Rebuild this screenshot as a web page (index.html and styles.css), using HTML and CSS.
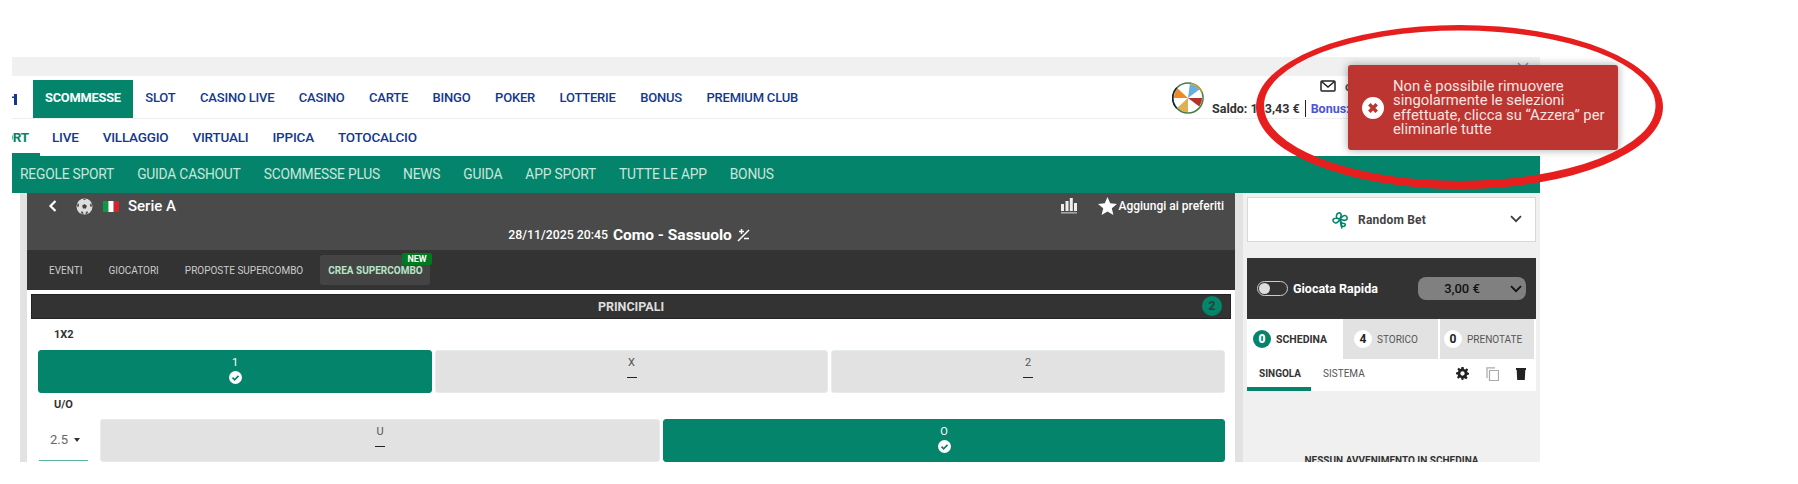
FILE: index.html
```html
<!DOCTYPE html>
<html lang="it">
<head>
    <meta charset="UTF-8">
    <meta name="viewport" content="width=device-width, initial-scale=1.0">
    <title>Scommesse - Serie A</title>
    <link rel="stylesheet" href="styles.css">
</head>
<body>
    <div class="page">
        <div class="topbar">
            <svg class="topbar-chevron" width="12" height="8" viewBox="0 0 12 8"><path d="M1 1l5 5 5-5" fill="none" stroke="#7f93bd" stroke-width="1.5"/></svg>
        </div>

        <!-- Main nav -->
        <header class="mainnav">
            <svg class="logo-cut" width="5" height="11" viewBox="0 0 5 11"><path d="M2 0h3v11H2V4H0V2.500h2z" fill="#12398f"/></svg>
            <a class="mainnav-active" href="#">SCOMMESSE</a>
            <a href="#">SLOT</a>
            <a href="#">CASINO LIVE</a>
            <a href="#">CASINO</a>
            <a href="#">CARTE</a>
            <a href="#">BINGO</a>
            <a href="#">POKER</a>
            <a href="#">LOTTERIE</a>
            <a href="#">BONUS</a>
            <a href="#">PREMIUM CLUB</a>
            <div class="account">
                <svg class="wheel" width="32" height="32" viewBox="0 0 34 34">
                    <circle cx="17" cy="17" r="16" fill="#fff"/>
                    <path d="M17 17L19 2A15 15 0 0 1 29 8z" fill="#6aaedc"/>
                    <path d="M17 17H32A15 15 0 0 1 29 26z" fill="#b03228"/>
                    <path d="M17 17V32A15 15 0 0 1 6 27z" fill="#dfb050"/>
                    <path d="M17 17H2A15 15 0 0 1 6 7z" fill="#ee8a26"/>
                    <circle cx="17" cy="17" r="16" fill="none" stroke="#4b7b45" stroke-width="1.6"/>
                    <path d="M5 6A16 16 0 0 0 5 28" fill="none" stroke="#123" stroke-width="1.6"/>
                    <path d="M20 1.500A16 16 0 0 1 32 11" fill="none" stroke="#c9a03c" stroke-width="1.6"/>
                </svg>
                <div class="account-info">
                    <div class="account-mail">
                        <svg width="16" height="12" viewBox="0 0 16 12"><rect x="1" y="1" width="14" height="10" rx="1" fill="none" stroke="#222" stroke-width="1.5"/><path d="M1.500 1.500L8 7l6.500-5.500" fill="none" stroke="#222" stroke-width="1.5"/></svg>
                        <span class="account-user">c</span>
                    </div>
                    <div class="account-balance">
                        <span>Saldo: 193,43 €</span>
                        <span class="account-bonus">Bonus:</span>
                    </div>
                </div>
            </div>
        </header>

        <nav class="subnav">
            <a class="subnav-active" href="#"><span>SPORT</span></a>
            <a href="#">LIVE</a>
            <a href="#">VILLAGGIO</a>
            <a href="#">VIRTUALI</a>
            <a href="#">IPPICA</a>
            <a href="#">TOTOCALCIO</a>
        </nav>

        <nav class="greenbar">
            <a href="#">REGOLE SPORT</a>
            <a href="#">GUIDA CASHOUT</a>
            <a href="#">SCOMMESSE PLUS</a>
            <a href="#">NEWS</a>
            <a href="#">GUIDA</a>
            <a href="#">APP SPORT</a>
            <a href="#">TUTTE LE APP</a>
            <a href="#">BONUS</a>
        </nav>

        <div class="content">
            <main class="event">
                <section class="event-head">
                    <div class="event-league">
                        <svg width="10" height="14" viewBox="0 0 10 14"><path d="M7.500 2L2.500 7l5 5" fill="none" stroke="#fff" stroke-width="2.2"/></svg>
                        <svg class="ball" width="17" height="17" viewBox="0 0 17 17">
                            <circle cx="8.500" cy="8.500" r="8" fill="#ddd"/>
                            <path d="M8.500 6l2.400 1.700-.9 2.800H7l-.9-2.800zM7 1l1.500 1.200L10 1zM1.800 5L3 6.500 2.500 9 1 8.500zM15.200 5L14 6.500l.5 2.500 1.500-.5zM5 13.500l2 .2.500 2.300-2-.5zM12 13.500l-2 .2-.5 2.300 2-.5z" fill="#444"/>
                        </svg>
                        <svg class="flag" width="16" height="11" viewBox="0 0 16 11"><rect width="5.4" height="11" fill="#0a9a46"/><rect x="5.4" width="5.3" height="11" fill="#fff"/><rect x="10.7" width="5.3" height="11" fill="#d8232f"/></svg>
                        <span class="event-league-name">Serie A</span>
                        <div class="event-actions">
                            <svg width="16" height="16" viewBox="0 0 16 16"><path d="M0 6h3v7H0zM4.500 3h3v10h-3zM8.800 0h3v13h-3zM13 5h3v8h-3z" fill="#eee"/><rect y="14.200" width="16" height="1.300" fill="#bbb"/></svg>
                            <div class="event-fav">
                                <svg width="19" height="18" viewBox="0 0 19 18"><path d="M9.500 0l2.700 6.300 6.800.6-5.200 4.400 1.600 6.700-5.900-3.600L3.600 18l1.600-6.700L0 6.900l6.800-.6z" fill="#fff"/></svg>
                                <span>Aggiungi ai preferiti</span>
                            </div>
                        </div>
                    </div>
                    <div class="event-title">
                        <span class="event-date">28/11/2025 20:45</span>
                        <span class="event-teams">Como - Sassuolo</span>
                        <svg width="13" height="13" viewBox="0 0 13 13"><path d="M1 12L12 1M2 2.500h5M4.500 0v5M7 9.500h5" fill="none" stroke="#fff" stroke-width="1.5"/></svg>
                    </div>
                </section>

                <div class="event-tabs">
                    <a href="#">EVENTI</a>
                    <a href="#">GIOCATORI</a>
                    <a href="#">PROPOSTE SUPERCOMBO</a>
                    <a class="event-tab-active" href="#">CREA SUPERCOMBO<span class="badge-new">NEW</span></a>
                </div>

                <div class="market-band">
                    <span>PRINCIPALI</span>
                    <span class="market-count">2</span>
                </div>

                <div class="market-label">1X2</div>
                <div class="odds-row">
                    <button class="odd odd-on"><span>1</span><svg class="odd-check" width="13" height="13" viewBox="0 0 13 13"><circle cx="6.500" cy="6.500" r="6.500" fill="#fff"/><path d="M3.500 6.700l2.100 2.100 3.900-4" fill="none" stroke="#04846a" stroke-width="1.7"/></svg></button>
                    <button class="odd"><span>X</span><i class="odd-dash"></i></button>
                    <button class="odd"><span>2</span><i class="odd-dash"></i></button>
                </div>

                <div class="market-label market-label-uo">U/O</div>
                <div class="odds-row odds-row-uo">
                    <div class="line-select"><span>2.5</span><i class="line-caret"></i></div>
                    <button class="odd"><span>U</span><i class="odd-dash"></i></button>
                    <button class="odd odd-on"><span>O</span><svg class="odd-check" width="13" height="13" viewBox="0 0 13 13"><circle cx="6.500" cy="6.500" r="6.500" fill="#fff"/><path d="M3.500 6.700l2.100 2.100 3.900-4" fill="none" stroke="#04846a" stroke-width="1.7"/></svg></button>
                </div>
            </main>

            <aside class="side">
                <div class="random-bet">
                    <svg width="18" height="18" viewBox="0 0 18 18"><path d="M9 8C6 8 5 6.500 5.500 4.500 6 2 9 1 10 3c.5 1 .3 2-1 5zM9 8c2-2.500 3-4 5-3.500 2.500.6 3 3.500 1 4.500-1.500.8-3.500.3-6-1zM9 8c-1.500 3-3 4.500-5 3.800C1.500 11 1.200 8 3.500 7.400 5 7 7 7.300 9 8zM9 8c1 3.500 1.500 4.500 4 4.500 2 .2 1.500 3-.5 3C10.500 15.500 9.500 12 9 8zM9.500 12l1.500 5.500" fill="none" stroke="#04846a" stroke-width="1.6"/></svg>
                    <span>Random Bet</span>
                    <svg class="random-chevron" width="12" height="8" viewBox="0 0 12 8"><path d="M1 1.200l5 5 5-5" fill="none" stroke="#3a4048" stroke-width="1.8"/></svg>
                </div>

                <div class="quick">
                    <span class="toggle"></span>
                    <span class="quick-label">Giocata Rapida</span>
                    <div class="quick-amount">
                        <span>3,00 €</span>
                        <svg width="12" height="8" viewBox="0 0 12 8"><path d="M1 1.200l5 5 5-5" fill="none" stroke="#111" stroke-width="1.8"/></svg>
                    </div>
                </div>

                <div class="slip-tabs">
                    <div class="slip-tab slip-tab-on"><b class="slip-num">0</b>SCHEDINA</div>
                    <div class="slip-tab"><b class="slip-num">4</b>STORICO</div>
                    <div class="slip-tab"><b class="slip-num">0</b>PRENOTATE</div>
                </div>

                <div class="slip-mode">
                    <a class="slip-mode-on" href="#">SINGOLA</a>
                    <a href="#">SISTEMA</a>
                    <div class="slip-tools">
                        <svg width="13" height="13" viewBox="0 0 24 24"><path fill-rule="evenodd" d="M10 0h4l.7 3.500 2.300 1 3-2L22.500 5l-2 3 1 2.300L24 11v3l-3.500.7-1 2.300 2 3-2.800 2.700-3-2-2.300 1L13.700 24h-3.400l-.7-3.500-2.300-1-3 2L1.800 19l2-3-1-2.300L0 13.500V10l3.500-.7 1-2.300-2-3L5 1.500l3 2 1.300-.5zM12 8a4 4 0 1 0 0 8 4 4 0 0 0 0-8z" fill="#222"/></svg>
                        <svg width="13" height="14" viewBox="0 0 13 14"><path d="M3.500 3.500h9v10h-9zM1 11V.8h8" fill="none" stroke="#aaa" stroke-width="1.2"/></svg>
                        <svg width="10" height="12" viewBox="0 0 10 12"><path d="M0 0h10v2H9.300L8.800 12H1.200L.7 2H0z" fill="#222"/></svg>
                    </div>
                </div>

                <div class="slip-empty">NESSUN AVVENIMENTO IN SCHEDINA</div>
            </aside>
        </div>
    </div>

    <!-- Error toast -->
    <div class="toast">
        <svg class="toast-icon" width="22" height="22" viewBox="0 0 22 22"><circle cx="11" cy="11" r="11" fill="#fff"/><path d="M7.300 7.300l7.400 7.400M14.700 7.300l-7.400 7.400" stroke="#bc3530" stroke-width="3.4"/></svg>
        <p>Non è possibile rimuovere singolarmente le selezioni effettuate, clicca su “Azzera” per eliminarle tutte</p>
    </div>

    <!-- Red marker circle drawn on the screenshot -->
    <svg class="marker" width="420" height="190" viewBox="0 0 420 190">
        <path fill-rule="evenodd" fill="#e61e1e" d="M2 84a203.500 82 0 1 0 407 0a203.500 82 0 1 0-407 0zM10 82.750a195.750 75.250 0 1 0 391.500 0a195.750 75.250 0 1 0-391.500 0z"/>
    </svg>
</body>
</html>
```

FILE: styles.css
```css
* {
    box-sizing: border-box;
}

body {
    margin: 0;
    background-color: #fff;
    font-family: "Roboto", "Liberation Sans", sans-serif;
    color: #333;
}

a {
    text-decoration: none;
    color: inherit;
}

.page {
    width: 1528px;
    height: 405px;
    margin: 57px 0 0 12px;
    overflow: hidden;
}

.marker {
    position: absolute;
    left: 1254px;
    top: 23px;
}

/* Top bars */
.topbar {
    position: relative;
    height: 19px;
    margin-bottom: 4px;
    background-color: #f0f0f0;
}

.topbar-chevron {
    position: absolute;
    right: 11px;
    top: 5px;
}

.mainnav {
    display: flex;
    align-items: center;
    height: 39px;
    border-bottom: 1px solid #eee;
    font-size: 13px;
    font-weight: 500;
    color: #12398f;
}

.mainnav a {
    padding: 0 12.25px 3px;
    white-space: nowrap;
    letter-spacing: -0.2px;
}

.logo-cut {
    margin-right: 16px;
}

.mainnav .mainnav-active {
    display: flex;
    align-items: center;
    height: 38px;
    width: 100px;
    padding: 0 12px 3px;
    background-color: #04846a;
    color: #fff;
    font-weight: 700;
    font-size: 12.8px;
}

.account {
    display: flex;
    gap: 8px;
    height: 38px;
    width: 368px;
    margin-left: auto;
    color: #333;
    letter-spacing: 0;
}

.wheel {
    margin-top: 2px;
}

.account-info {
    display: flex;
    flex-direction: column;
    gap: 8px;
}

.account-mail {
    display: flex;
    align-items: center;
    gap: 9px;
    height: 12px;
    padding-left: 108px;
}

.account-user {
    font-size: 13px;
    color: #555;
    font-weight: 700;
}

.account-balance {
    display: flex;
    align-items: center;
    font-size: 12.5px;
    font-weight: 700;
    white-space: nowrap;
}

.account-bonus {
    margin-left: 5px;
    padding-left: 5px;
    border-left: 1px solid #222;
    color: #4a55d8;
    line-height: 17px;
}

.subnav {
    display: flex;
    height: 37px;
    font-size: 13.5px;
    font-weight: 500;
    color: #12398f;
}

.subnav a {
    padding: 0 12px;
    line-height: 36px;
    letter-spacing: -0.2px;
}

.subnav .subnav-active {
    display: flex;
    justify-content: flex-end;
    width: 28px;
    padding: 0 11px 0 0;
    border-bottom: 3px solid #04846a;
    overflow: hidden;
    color: #04846a;
    font-weight: 700;
}

.subnav-active span {
    flex-shrink: 0;
}

.greenbar {
    display: flex;
    align-items: center;
    gap: 23px;
    height: 37px;
    padding: 0 0 2px 8px;
    background-color: #04846a;
    color: #c9e6dc;
    font-size: 13.8px;
    letter-spacing: -0.2px;
}

.greenbar a {
    white-space: nowrap;
}

/* Content */
.content {
    display: flex;
    height: 269px;
    padding-left: 8px;
}

.event {
    width: 1215px;
    flex-shrink: 0;
    border-left: 7px solid #e2e2e2;
}

.event-head {
    height: 57px;
    background-color: #4a4a4a;
    color: #fff;
}

.event-league {
    display: flex;
    align-items: center;
    height: 28px;
    padding: 0 11px 2px 21px;
}

.ball {
    margin-left: 18px;
}

.flag {
    margin-left: 10px;
}

.event-league-name {
    margin-left: 9px;
    font-size: 15px;
    font-weight: 500;
}

.event-actions {
    display: flex;
    align-items: center;
    gap: 21px;
    margin-left: auto;
}

.event-fav {
    display: flex;
    align-items: center;
    gap: 1px;
    font-size: 12px;
    font-weight: 500;
}

.event-title {
    display: flex;
    justify-content: center;
    align-items: center;
    gap: 5px;
    height: 28px;
    padding-right: 4px;
}

.event-date {
    font-size: 12.3px;
    font-weight: 500;
}

.event-teams {
    font-size: 15.5px;
    font-weight: 700;
}

.event-tabs {
    display: flex;
    align-items: center;
    gap: 26px;
    height: 40px;
    padding-left: 22px;
    background-color: #333;
    color: #ccc;
    font-size: 10px;
}

.event-tab-active {
    position: relative;
    display: flex;
    align-items: center;
    height: 30px;
    margin-left: -9px;
    padding: 0 7px 0 8px;
    border-radius: 3px;
    background-color: #444;
    color: #b6e6c6;
    font-weight: 700;
}

.badge-new {
    position: absolute;
    right: -2px;
    top: -2px;
    padding: 0 5px;
    border-radius: 2px;
    background-color: #007a1e;
    color: #fff;
    font-size: 9px;
    line-height: 12px;
}

.market-band {
    position: relative;
    display: flex;
    justify-content: center;
    align-items: center;
    height: 25px;
    margin: 4px 4px 0;
    background-color: #333;
    border: 1px solid #222;
    color: #ddd;
    font-size: 12.5px;
    font-weight: 700;
}

.market-count {
    position: absolute;
    right: 8px;
    top: 1px;
    width: 20px;
    height: 20px;
    border-radius: 50%;
    background-color: #04846a;
    color: #2b3d38;
    font-size: 12px;
    line-height: 20px;
    text-align: center;
}

.market-label {
    height: 31px;
    padding: 9px 0 0 27px;
    font-size: 11px;
    font-weight: 700;
}

.market-label-uo {
    height: 26px;
    padding-top: 5px;
}

.odds-row {
    display: grid;
    grid-template-columns: 394px 393px 394px;
    gap: 3px;
    width: 1187px;
    height: 43px;
    margin-left: 11px;
}

.odds-row-uo {
    grid-template-columns: 59px 560px 562px;
}

.odd {
    display: flex;
    flex-direction: column;
    align-items: center;
    padding: 5px 0 0;
    border: 1px solid #e6ecea;
    border-radius: 3px;
    background-color: #e2e2e2;
    color: #555;
    font-family: inherit;
    font-size: 11px;
    line-height: 13px;
}

.odd-on {
    background-color: #04846a;
    border-color: #04846a;
    color: #fff;
}

.odd-check {
    margin-top: 2px;
}

.odd-dash {
    width: 10px;
    height: 1px;
    margin-top: 8px;
    background-color: #222;
}

.line-select {
    display: flex;
    align-items: center;
    gap: 6px;
    margin: 0 9px 1px 1px;
    padding-left: 11px;
    border-bottom: 1px solid #5cb8a2;
    color: #666;
    font-size: 13px;
}

.line-caret {
    border-left: 3.5px solid transparent;
    border-right: 3.5px solid transparent;
    border-top: 4px solid #333;
}

/* Right column */
.side {
    width: 305px;
    flex-shrink: 0;
    padding: 4px 4px 0;
    border-left: 8px solid #e2e2e2;
    background-color: #f0f0f0;
}

.random-bet {
    position: relative;
    display: flex;
    justify-content: center;
    align-items: center;
    gap: 9px;
    height: 45px;
    margin-bottom: 16px;
    padding-right: 26px;
    background-color: #fff;
    border: 1px solid #d8d8d8;
    color: #444;
    font-size: 12px;
    font-weight: 700;
    letter-spacing: 0.2px;
}

.random-chevron {
    position: absolute;
    right: 13px;
    top: 17px;
}

.quick {
    display: flex;
    align-items: center;
    height: 61px;
    padding: 0 10px;
    background-color: #333;
}

.toggle {
    position: relative;
    width: 31px;
    height: 15px;
    border: 1px solid #ccc;
    border-radius: 8px;
}

.toggle::before {
    content: "";
    position: absolute;
    left: 1px;
    top: 1px;
    width: 11px;
    height: 11px;
    border-radius: 50%;
    background-color: #ddd;
}

.quick-label {
    margin-left: 5px;
    color: #fff;
    font-size: 12.5px;
    font-weight: 700;
}

.quick-amount {
    position: relative;
    display: flex;
    justify-content: center;
    align-items: center;
    width: 108px;
    height: 23px;
    margin-left: auto;
    padding-right: 20px;
    border-radius: 8px;
    background-color: #808080;
    color: #111;
    font-size: 13px;
    font-weight: 500;
}

.quick-amount svg {
    position: absolute;
    right: 4px;
    top: 8px;
}

.slip-tabs {
    display: grid;
    grid-template-columns: 96px 95px 98px;
    height: 40px;
    background-color: #fff;
}

.slip-tab {
    display: flex;
    align-items: center;
    gap: 5px;
    padding-left: 11px;
    background-color: #e2e2e2;
    color: #555;
    font-size: 10px;
}

.slip-tab:last-child {
    margin: 0 2px;
    padding-left: 4px;
}

.slip-tab-on {
    padding-left: 6px;
    background-color: #fff;
    color: #333;
    font-size: 10.5px;
    font-weight: 700;
}

.slip-num {
    width: 18px;
    height: 18px;
    border-radius: 50%;
    background-color: #fff;
    color: #222;
    font-size: 12px;
    line-height: 18px;
    text-align: center;
}

.slip-tab-on .slip-num {
    background-color: #04846a;
    color: #fff;
}

.slip-mode {
    position: relative;
    display: flex;
    align-items: center;
    gap: 22px;
    height: 32px;
    padding: 0 10px 3px 12px;
    background-color: #fff;
    color: #555;
    font-size: 10px;
}

.slip-mode-on {
    color: #333;
    font-weight: 700;
}

.slip-mode::after {
    content: "";
    position: absolute;
    left: 0;
    bottom: 0;
    width: 64px;
    height: 4px;
    background-color: #04846a;
}

.slip-tools {
    display: flex;
    align-items: center;
    gap: 17px;
    margin-left: auto;
}

.slip-empty {
    margin-top: 63px;
    font-size: 10px;
    font-weight: 700;
    line-height: 14px;
    text-align: center;
}

/* Toast */
.toast {
    position: absolute;
    left: 1348px;
    top: 65px;
    display: flex;
    align-items: center;
    gap: 9px;
    width: 270px;
    height: 85px;
    padding: 0 8px 0 14px;
    border-radius: 3px;
    background-color: #bc3530;
    box-shadow: 0 0 8px rgba(0, 0, 0, 0.35);
    color: #f7e4e2;
    font-size: 14.8px;
    line-height: 14.5px;
}

.toast p {
    margin: 0;
}

.toast-icon {
    flex-shrink: 0;
}
```
